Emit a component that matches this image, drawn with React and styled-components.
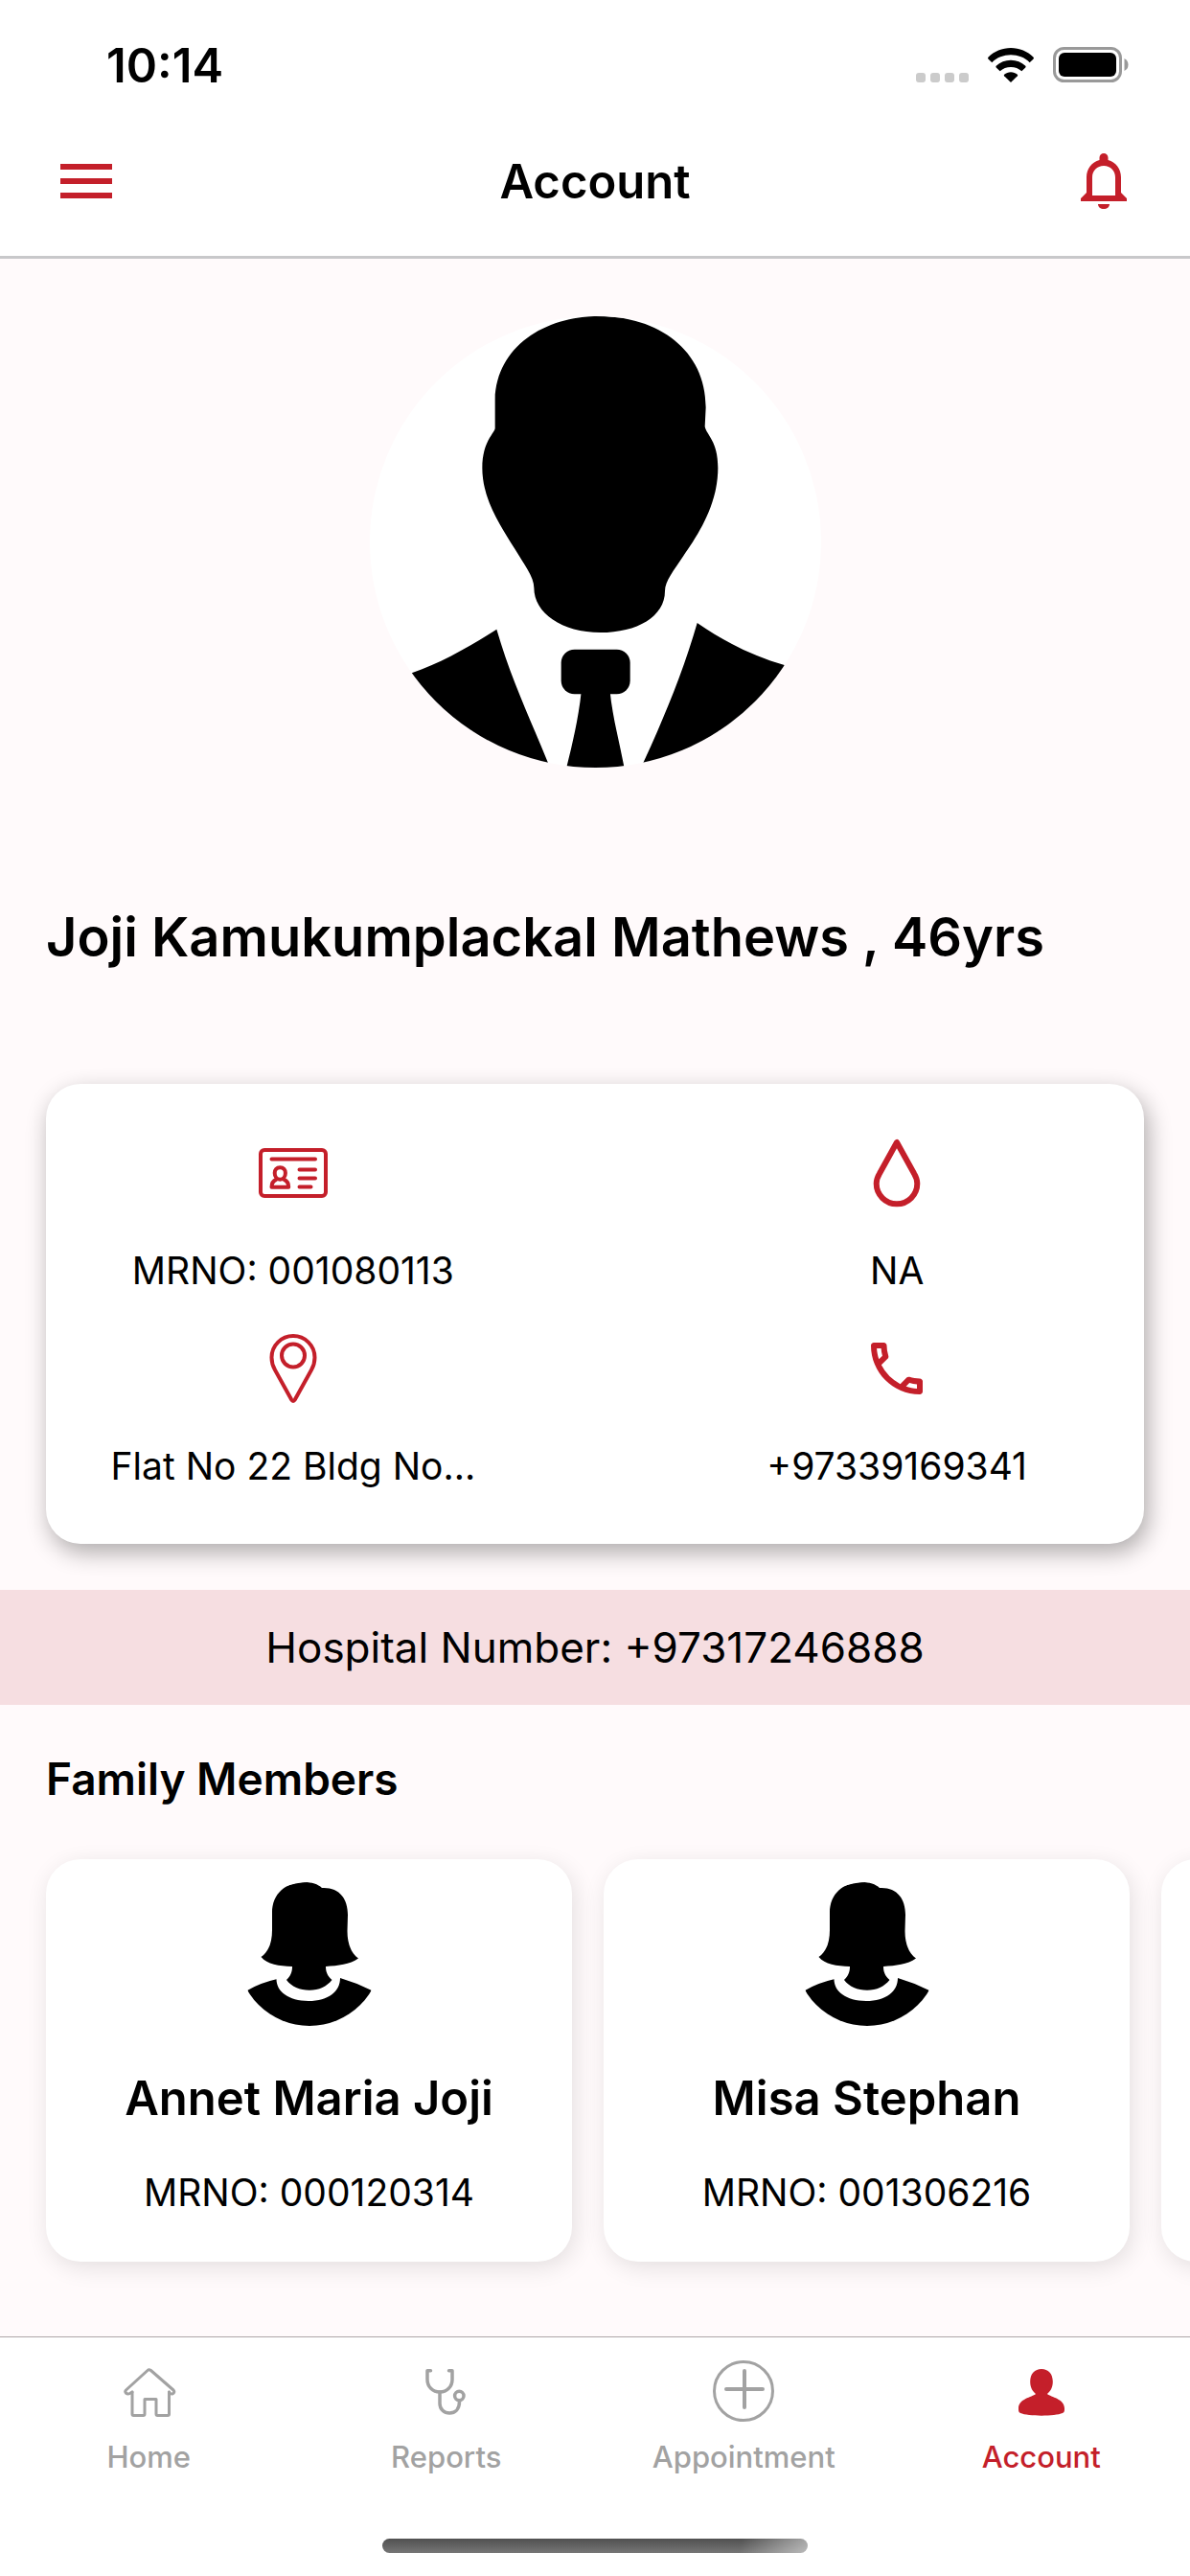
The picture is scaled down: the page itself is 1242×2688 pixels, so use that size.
import React from 'react';
import styled, { createGlobalStyle } from 'styled-components';

const RED = '#c41f2a';
const GREY = '#a2a2a2';

const GlobalStyle = createGlobalStyle`
  * {
    box-sizing: border-box;
  }

  body {
    margin: 0;
    background: #fffafb;
    color: #000;
    font-family: Inter, "Liberation Sans", sans-serif;
  }

  h1, h2, h3, p, ul, dl, dd {
    margin: 0;
    padding: 0;
  }
`;

const Screen = styled.div`
  display: flex;
  flex-direction: column;
  min-height: 100vh;
  overflow: hidden;
`;

const TopArea = styled.header`
  background: #fff;
  border-bottom: 3px solid #c8c8ca;
`;

const StatusBar = styled.div`
  display: flex;
  align-items: center;
  justify-content: space-between;
  height: 136px;
  padding: 0 63px 0 111px;
`;

const Time = styled.span`
  font-size: 49px;
  font-weight: 600;
`;

const StatusIcons = styled.div`
  display: flex;
  align-items: center;
  gap: 20px;
`;

const TitleBar = styled.div`
  display: grid;
  grid-template-columns: 72px 1fr 72px;
  align-items: center;
  height: 106px;
  margin: 0 54px 25px;
`;

const IconButton = styled.button`
  display: block;
  width: 72px;
  height: 72px;
  padding: 0;
  border: 0;
  background: none;
  color: ${RED};
`;

const Title = styled.h1`
  font-size: 49px;
  font-weight: 600;
  text-align: center;
`;

const Content = styled.main`
  flex: 1;
  display: flex;
  flex-direction: column;
  padding-top: 60px;
`;

const Avatar = styled.div`
  width: ${props => props.$size}px;
  height: ${props => props.$size}px;
  flex: none;
  align-self: center;
  border-radius: 50%;
  overflow: hidden;
  background: #fff;

  svg {
    display: block;
  }
`;

const PatientName = styled.h2`
  margin: 141px 48px 117px;
  font-size: 56px;
  font-weight: 600;
  line-height: 72px;
`;

const InfoCard = styled.dl`
  display: grid;
  grid-template-columns: 45% 45%;
  justify-content: space-between;
  row-gap: 42px;
  margin: 0 48px 48px;
  padding: 57px 0;
  border-radius: 36px;
  background: #fff;
  box-shadow: 4px 9px 24px rgba(0, 0, 0, 0.32);
`;

const InfoItem = styled.div`
  display: flex;
  flex-direction: column;
  align-items: center;
  gap: 42px;
  color: ${RED};

  dt {
    height: 72px;
  }
`;

const InfoText = styled.dd`
  color: #000;
  font-size: 39px;
  line-height: 48px;
`;

const Hotline = styled.p`
  padding: 30px 48px;
  background: #f6dee1;
  font-size: 44px;
  line-height: 60px;
  text-align: center;
`;

const SectionTitle = styled.h2`
  margin: 47px 48px 0;
  font-size: 46px;
  font-weight: 600;
  line-height: 60px;
`;

const FamilyList = styled.ul`
  display: flex;
  gap: 33px;
  padding: 54px 48px 78px;
  overflow-x: auto;
  scrollbar-width: none;
  list-style: none;
`;

const FamilyCard = styled.li`
  flex: 0 0 549px;
  display: flex;
  flex-direction: column;
  padding: 24px 24px 48px;
  border-radius: 36px;
  background: #fff;
  box-shadow: 3px 6px 24px rgba(0, 0, 0, 0.11);
  text-align: center;
`;

const MemberName = styled.h3`
  margin: 46px 0 44px;
  font-size: 49px;
  font-weight: 600;
  line-height: 60px;
`;

const MemberNumber = styled.p`
  font-size: 39px;
  line-height: 48px;
`;

const BottomArea = styled.footer`
  display: flex;
  flex-direction: column;
  align-items: center;
  gap: 67px;
  padding: 24px 0;
  border-top: 1px solid #aea6a8;
  background: #fff;
`;

const Tabs = styled.nav`
  display: grid;
  grid-template-columns: repeat(4, 1fr);
  width: 100%;
`;

const Tab = styled.a`
  display: flex;
  flex-direction: column;
  align-items: center;
  gap: 19px;
  color: ${props => (props.$active ? RED : GREY)};
  font-size: 31px;
  font-weight: 500;
  line-height: 36px;
  text-decoration: none;
`;

const HomeIndicator = styled.div`
  width: 444px;
  height: 15px;
  border-radius: 8px;
  background:
    linear-gradient(100deg, transparent 84%, rgba(255, 255, 255, 0.5)),
    linear-gradient(#505050, #767676);
`;

function SignalIcon() {
  return (
    <svg width="55" height="36" viewBox="0 0 55 36" fill="#cbcbcb">
      <rect x="0" y="26" width="10" height="10" rx="3" />
      <rect x="15" y="26" width="10" height="10" rx="3" />
      <rect x="30" y="26" width="10" height="10" rx="3" />
      <rect x="45" y="26" width="10" height="10" rx="3" />
    </svg>
  );
}

function WifiIcon() {
  return (
    <svg width="48" height="36" viewBox="0 0 48 36">
      <path d="M24 0C33 0 41.500 3.500 47.600 9.800Q48.300 10.600 47.600 11.400L43.700 15.200C38.500 10 31.500 7.300 24 7.300S9.500 10 4.300 15.200L.4 11.400Q-.3 10.600 .4 9.800C6.500 3.500 15 0 24 0Z" />
      <path d="M24 12.700C29.800 12.700 35.200 14.900 39.300 18.800Q40 19.600 39.300 20.400L35.300 24.300C32.300 21.500 28.300 20 24 20S15.700 21.500 12.700 24.300L8.700 20.400Q8 19.600 8.700 18.800C12.800 14.900 18.200 12.700 24 12.700Z" />
      <path d="M24 25.200C26.600 25.200 29 26.100 30.900 27.700Q31.600 28.500 30.900 29.200L24 36L17.100 29.200Q16.400 28.500 17.100 27.700C19 26.100 21.400 25.200 24 25.200Z" />
    </svg>
  );
}

function BatteryIcon() {
  return (
    <svg width="80" height="38" viewBox="0 0 80 38">
      <rect x="1.500" y="1.500" width="69" height="34" rx="10" fill="none" stroke="#999" strokeWidth="3" />
      <rect x="6" y="6" width="60" height="25" rx="6" />
      <path d="M74.500 12Q78.500 14 78.500 18.500T74.500 25Z" fill="#999" />
    </svg>
  );
}

function MenuIcon() {
  return (
    <svg width="72" height="72" viewBox="0 0 72 72" fill="currentColor">
      <path d="M9 18h54v6H9zM9 33h54v6H9zM9 48h54v6H9z" />
    </svg>
  );
}

function BellIcon() {
  return (
    <svg width="72" height="72" viewBox="0 0 72 72" fill="currentColor" fillRule="evenodd">
      <path d="M36 7a4.500 4.500 0 0 1 4.500 4.500v2.600C48.500 16 54 23.500 54 32v16l6 6v3H12v-3l6-6V32c0-8.500 5.500-16 13.500-17.900v-2.600A4.500 4.500 0 0 1 36 7ZM36 20c-7 0-12 5-12 12v19h24V32c0-7-5-12-12-12ZM30 60h12c0 3-2.700 5-6 5s-6-2-6-5Z" />
    </svg>
  );
}

function ManPicture() {
  return (
    <svg width="471" height="471" viewBox="78 90 1413 1413">
      <path d="M470 440V350C475 185 625 90 795 90C980 90 1130 195 1130 375L1127 435C1132 462 1168 480 1168 565C1168 680 1105 775 1060 840C1030 885 1002 920 1002 950C1002 1030 915 1080 800 1080C680 1080 592 1020 592 940C592 905 560 865 530 815C490 750 430 665 430 565C430 480 470 455 470 440Z" />
      <path d="M120 1236L209 1207C300 1175 390 1125 475 1070C520 1225 580 1350 635 1486L650 1530H120Z" />
      <path d="M1103 1050C1190 1110 1280 1155 1376 1182L1500 1215V1530H920L935 1486C1000 1345 1060 1200 1103 1050Z" />
      <rect x="677" y="1133" width="216" height="140" rx="42" />
      <path d="M740 1265H830C838 1345 860 1425 876 1510H692C712 1430 732 1345 740 1265Z" />
    </svg>
  );
}

function WomanPicture() {
  return (
    <svg width="150" height="150" viewBox="0 0 150 150">
      <path d="M24.500 78C33 72 36 62 36 50V32C36 12 50 0 70 0C77 0 84 2 88 6C106 5 115 17 115 34L114.500 51C114.500 63 118 74 126 79.500C117 86 105 87 92 88C92 94 94 98 98.500 102C93 109 85 112.700 75 112.700C65 112.700 56 109 51 102C55 98 57 94 57 88C43 87.500 31 86 24.500 78Z" />
      <path d="M10.600 112.700Q24 105 40.500 101.300C40.500 114 53 124 74 124C95 124 107 114 107 100Q124 105 139.400 112.700V150H10.600Z" />
    </svg>
  );
}

function IdCardIcon() {
  return (
    <svg width="72" height="72" viewBox="0 0 72 72" fill="none" stroke="currentColor" strokeWidth="4" strokeLinecap="round" strokeLinejoin="round">
      <rect x="2" y="12" width="68" height="48" rx="4" />
      <path d="M13.500 21.500h45.500M42.500 32.500h16.500M42.500 41.500h16.500M42.500 50.500h12" />
      <path d="M22.300 30.300c-3.600 0-5.600 2.400-5.600 5.700s2 6.700 5.600 6.700s5.600-3.400 5.600-6.700s-2-5.700-5.600-5.700Z" />
      <path d="M18.300 42.800c-3 1.200-4.800 4.200-4.800 7.900h17.700c0-3.700-1.800-6.700-4.800-7.900" />
    </svg>
  );
}

function DropIcon() {
  return (
    <svg width="72" height="72" viewBox="0 0 72 72" fill="none" stroke="currentColor" strokeWidth="6" strokeLinejoin="round">
      <path d="M36 4L18 36.500C15.600 40.500 14.700 43.500 14.700 47A21.300 21.300 0 0 0 57.300 47C57.300 43.500 56.400 40.500 54 36.500Z" />
    </svg>
  );
}

function PinIcon() {
  return (
    <svg width="72" height="72" viewBox="0 0 72 72" fill="none" stroke="currentColor" strokeWidth="4">
      <path d="M36 2C23.600 2 13.500 12 13.500 24.500C13.500 29 15 34 17 37.500L34.200 68.500Q36 71.500 37.800 68.500L55 37.500C57 34 58.500 29 58.500 24.500C58.500 12 48.400 2 36 2Z" />
      <circle cx="36" cy="22.500" r="12" />
    </svg>
  );
}

function PhoneIcon() {
  return (
    <svg width="72" height="72" viewBox="0 0 24 24" fill="currentColor">
      <path d="M6.540 5c.06.890.210 1.760.450 2.590l-1.200 1.200c-.41-1.200-.67-2.470-.76-3.790h1.510m9.860 12.020c.85.240 1.720.390 2.600.450v1.490c-1.320-.09-2.590-.35-3.800-.75l1.200-1.190M7.500 3H4c-.55 0-1 .45-1 1 0 9.390 7.610 17 17 17 .55 0 1-.45 1-1v-3.490c0-.55-.45-1-1-1-1.240 0-2.450-.2-3.570-.57a.84.84 0 0 0-.31-.05c-.26 0-.51.1-.71.290l-2.200 2.200a15.149 15.149 0 0 1-6.590-6.590l2.200-2.200c.28-.28.36-.67.250-1.020A11.360 11.360 0 0 1 8.500 4c0-.55-.45-1-1-1z" />
    </svg>
  );
}

function HomeIcon() {
  return (
    <svg width="64" height="64" viewBox="0 0 64 64" fill="none" stroke="currentColor" strokeWidth="3" strokeLinecap="round" strokeLinejoin="round">
      <path d="M15 33V56q0 1.500 1.500 1.500h10q1.500 0 1.500-1.500V40.500h12V56q0 1.500 1.500 1.500h10.500q1.500 0 1.500-1.500V33" />
      <path d="M15 33L12.500 34.500C9.500 36 6.500 33.500 8.500 31L31 10.500Q32.500 9 34.500 10.500L58 31C60 33.500 57.500 36 54.500 34.500L53.500 33" />
    </svg>
  );
}

function StethoscopeIcon() {
  return (
    <svg width="64" height="64" viewBox="0 0 64 64" fill="none" stroke="currentColor" strokeWidth="3.500" strokeLinecap="round" strokeLinejoin="round">
      <path d="M15.500 10.700H12V20C12 27.500 17.500 33 25 33S38 27.500 38 20V10.700H34.500" />
      <path d="M25 33V45C25 51 29.500 55 35.200 55S45.500 51 45.500 43" />
      <circle cx="45.300" cy="37" r="4.700" />
    </svg>
  );
}

function PlusIcon() {
  return (
    <svg width="64" height="64" viewBox="0 0 64 64" fill="none" stroke="currentColor" strokeLinecap="round">
      <circle cx="32" cy="32" r="30.500" strokeWidth="3" />
      <path d="M33 11v38M14 30h38" strokeWidth="4" />
    </svg>
  );
}

function PersonIcon() {
  return (
    <svg width="64" height="64" viewBox="0 0 64 64" fill="currentColor">
      <path d="M32 9C39 9 43.800 14 43.800 22C43.800 28 41.500 32 38 35C42 38.500 56 40 56 50C56 53 56 54 54 55C46 58.500 18 58.500 10 55C8 54 8 53 8 50C8 40 22 38.500 26 35C22.500 32 20.200 28 20.200 22C20.200 14 25 9 32 9Z" />
    </svg>
  );
}

const details = [
  { label: 'Medical record number', Icon: IdCardIcon, text: 'MRNO: 001080113' },
  { label: 'Blood group', Icon: DropIcon, text: 'NA' },
  { label: 'Address', Icon: PinIcon, text: 'Flat No 22 Bldg No...' },
  { label: 'Phone', Icon: PhoneIcon, text: '+97339169341' },
];

const family = [
  { name: 'Annet Maria Joji', mrno: '000120314' },
  { name: 'Misa Stephan', mrno: '001306216' },
];

const tabs = [
  { name: 'Home', Icon: HomeIcon },
  { name: 'Reports', Icon: StethoscopeIcon },
  { name: 'Appointment', Icon: PlusIcon },
  { name: 'Account', Icon: PersonIcon },
];

export default function App() {
  const [activeTab, setActiveTab] = React.useState('Account');

  return (
    <Screen>
      <GlobalStyle />
      <TopArea>
        <StatusBar>
          <Time>10:14</Time>
          <StatusIcons>
            <SignalIcon />
            <WifiIcon />
            <BatteryIcon />
          </StatusIcons>
        </StatusBar>
        <TitleBar>
          <IconButton type="button" aria-label="Menu">
            <MenuIcon />
          </IconButton>
          <Title>Account</Title>
          <IconButton type="button" aria-label="Notifications">
            <BellIcon />
          </IconButton>
        </TitleBar>
      </TopArea>

      <Content>
        <Avatar $size={471}>
          <ManPicture />
        </Avatar>
        <PatientName>Joji Kamukumplackal Mathews , 46yrs</PatientName>

        <InfoCard>
          {details.map(({ label, Icon, text }) => (
            <InfoItem key={label}>
              <dt aria-label={label}>
                <Icon />
              </dt>
              <InfoText>{text}</InfoText>
            </InfoItem>
          ))}
        </InfoCard>

        <Hotline>Hospital Number: +97317246888</Hotline>

        <SectionTitle>Family Members</SectionTitle>
        <FamilyList>
          {family.map(member => (
            <FamilyCard key={member.mrno}>
              <Avatar $size={150}>
                <WomanPicture />
              </Avatar>
              <MemberName>{member.name}</MemberName>
              <MemberNumber>MRNO: {member.mrno}</MemberNumber>
            </FamilyCard>
          ))}
          <FamilyCard />
        </FamilyList>
      </Content>

      <BottomArea>
        <Tabs>
          {tabs.map(({ name, Icon }) => (
            <Tab
              key={name}
              href={`#${name.toLowerCase()}`}
              $active={name === activeTab}
              onClick={() => setActiveTab(name)}
            >
              <Icon />
              {name}
            </Tab>
          ))}
        </Tabs>
        <HomeIndicator />
      </BottomArea>
    </Screen>
  );
}
